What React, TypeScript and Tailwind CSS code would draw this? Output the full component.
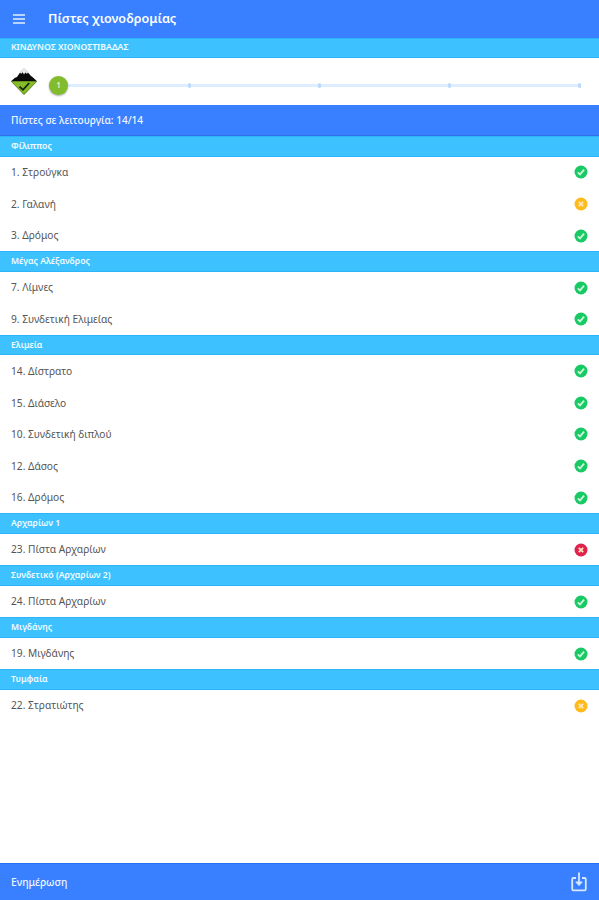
type Status = "open" | "partial" | "closed";

type Slope = { name: string; status: Status };

const groups: { title: string; slopes: Slope[] }[] = [
  {
    title: "Φίλιππος",
    slopes: [
      { name: "1. Στρούγκα", status: "open" },
      { name: "2. Γαλανή", status: "partial" },
      { name: "3. Δρόμος", status: "open" },
    ],
  },
  {
    title: "Μέγας Αλέξανδρος",
    slopes: [
      { name: "7. Λίμνες", status: "open" },
      { name: "9. Συνδετική Ελιμείας", status: "open" },
    ],
  },
  {
    title: "Ελιμεία",
    slopes: [
      { name: "14. Δίστρατο", status: "open" },
      { name: "15. Διάσελο", status: "open" },
      { name: "10. Συνδετική διπλού", status: "open" },
      { name: "12. Δάσος", status: "open" },
      { name: "16. Δρόμος", status: "open" },
    ],
  },
  { title: "Αρχαρίων 1", slopes: [{ name: "23. Πίστα Αρχαρίων", status: "closed" }] },
  { title: "Συνδετικό (Αρχαρίων 2)", slopes: [{ name: "24. Πίστα Αρχαρίων", status: "open" }] },
  { title: "Μιγδάνης", slopes: [{ name: "19. Μιγδάνης", status: "open" }] },
  { title: "Τυμφαία", slopes: [{ name: "22. Στρατιώτης", status: "partial" }] },
];

const statusColor: Record<Status, string> = {
  open: "text-[#18c964]",
  partial: "text-[#fdbb1c]",
  closed: "text-[#e0224e]",
};

function StatusIcon({ status }: { status: Status }) {
  return (
    <svg viewBox="0 0 14 14" className={`size-[14px] ${statusColor[status]}`}>
      <circle cx="7" cy="7" r="6.5" fill="currentColor" />
      {status === "open" ? (
        <path d="M3.8 7.4 6 9.4 10.1 4.6" fill="none" stroke="#c9f7da" strokeWidth="1.8" />
      ) : (
        <path d="M4.8 4.8 9.2 9.2M9.2 4.8 4.8 9.2" fill="none" stroke="#ffe6c0" strokeWidth="1.8" />
      )}
    </svg>
  );
}

function DangerLogo() {
  return (
    <svg viewBox="0 0 26 27" className="h-[27px] w-[26px] shrink-0">
      <path d="M0 13H26L13 26.7Z" fill="#84bd25" />
      <path d="M0 13.3 4 9.8 6 9 9.2 4.2 13 .5 16.8 4.2 19.5 7.6 22 9.5 26 13.3Z" fill="#0b0b0b" />
      <path d="M13 0 8.8 4.7 10.3 5.8 11.6 4.2 13 6.5 14.4 4.5 15.8 5.8 17.2 4.7Z" fill="#e9e9e9" />
      <path d="M0 13.2 13 26.5 26 13.2" fill="none" stroke="#3f5a16" strokeWidth=".7" />
      <path d="M8.5 18.6 12 21.8 18.2 15" fill="none" stroke="#18240c" strokeWidth="1.8" />
    </svg>
  );
}

function DangerSlider() {
  return (
    <div className="relative ml-[12px] flex h-[20px] flex-1 items-center">
      <div className="ml-[9px] flex h-[3px] flex-1 items-center justify-between bg-[#dceeff]">
        {[1, 2, 3, 4, 5].map((level) => (
          <span key={level} className="h-[5px] w-[3px] rounded-full bg-[#bcd8fa]" />
        ))}
      </div>
      <span className="absolute left-0 flex size-[19px] items-center justify-center rounded-full bg-[#82bb2c] text-[8px] font-semibold text-[#e4f5cb] shadow-[0_1px_2px_rgba(0,0,0,0.35)]">
        1
      </span>
    </div>
  );
}

function SectionBar({ title }: { title: string }) {
  return (
    <div className="flex h-[20.4px] items-center border-y border-[#2cb4fa] bg-[#3dc2ff] px-[11px] text-[8.7px] font-semibold text-[#f2fbff]">
      {title}
    </div>
  );
}

export default function App() {
  return (
    <div className="flex h-[900px] w-full flex-col bg-white font-['Noto_Sans',sans-serif] whitespace-nowrap">
      <header className="flex h-[37.6px] shrink-0 items-center bg-[#3880ff] px-[13px] text-white">
        <svg viewBox="0 0 12 10" className="h-[10px] w-[12px]">
          <path d="M0 1H12M0 5H12M0 9H12" stroke="#e3eeff" strokeWidth="1.4" />
        </svg>
        <h1 className="ml-[23px] pt-[2px] text-[12.6px] font-semibold">Πίστες χιονοδρομίας</h1>
      </header>
      <SectionBar title="ΚΙΝΔΥΝΟΣ ΧΙΟΝΟΣΤΙΒΑΔΑΣ" />
      <div className="flex h-[46.6px] shrink-0 items-center pr-[18px] pl-[11px]">
        <DangerLogo />
        <div className="flex flex-1 pt-[8px]">
          <DangerSlider />
        </div>
      </div>
      <div className="flex h-[31.7px] shrink-0 items-center border-b border-[#2f6fe6] bg-[#3880ff] px-[11px] pt-px text-[10.1px] font-medium text-[#f0f5ff]">
        Πίστες σε λειτουργία: 14/14
      </div>
      <main className="flex-1">
        {groups.map((group) => (
          <section key={group.title}>
            <SectionBar title={group.title} />
            {group.slopes.map((slope) => (
              <div key={slope.name} className="flex h-[31.6px] items-center justify-between px-[11px] text-[10.2px] text-[#555]">
                <span className="pt-px">{slope.name}</span>
                <StatusIcon status={slope.status} />
              </div>
            ))}
          </section>
        ))}
      </main>
      <footer className="flex h-[37px] shrink-0 items-center justify-between border-t border-[#2471f5] bg-[#3880ff] pr-[12px] pl-[11px] text-[10.3px] font-medium text-[#f0f5ff]">
        <span className="pt-px">Ενημέρωση</span>
        <svg viewBox="0 0 16 20" className="h-[20px] w-[16px]" fill="none" stroke="#d9e7ff" strokeWidth="1.8" strokeLinejoin="round">
          <path d="M5 6H2.5Q1.2 6 1.2 7.3V17Q1.2 18.3 2.5 18.3H13.5Q14.8 18.3 14.8 17V7.3Q14.8 6 13.5 6H11" />
          <path d="M8 .5V11" />
          <path d="M4.8 10H11.2L8 13.6Z" fill="#d9e7ff" strokeWidth="1" />
        </svg>
      </footer>
    </div>
  );
}
